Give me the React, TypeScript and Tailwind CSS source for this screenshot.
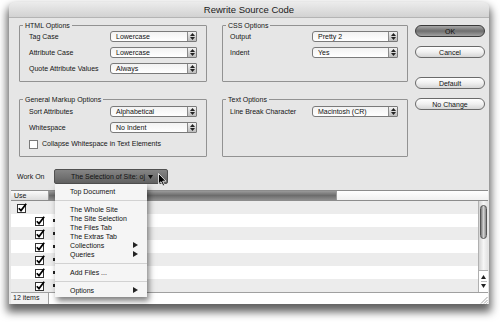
import React from "react";

const FONT = { fontFamily: '"Liberation Sans", Arial, Helvetica, sans-serif' };

function Stepper() {
  return (
    <div className="flex w-[9px] flex-col items-center justify-center gap-[1px] border-l border-[#8a8a8a] bg-gradient-to-b from-[#f4f4f4] via-[#d6d6d6] to-[#bdbdbd]">
      <svg width="5" height="3" viewBox="0 0 5 3">
        <path d="M0 3 L2.5 0 L5 3 Z" fill="#222" />
      </svg>
      <svg width="5" height="3" viewBox="0 0 5 3">
        <path d="M0 0 L5 0 L2.5 3 Z" fill="#222" />
      </svg>
    </div>
  );
}

function Popup({ value, w }: { value: string; w: string }) {
  return (
    <div
      className={`flex h-[11px] ${w} overflow-hidden rounded-l-[3px] rounded-r-[1px] border border-[#7a7a7a] bg-gradient-to-b from-[#f2f2f2] to-white`}
    >
      <div className="flex-1 pl-[5px] text-[7px] leading-[9px] text-[#111]">{value}</div>
      <Stepper />
    </div>
  );
}

function Row({ label, value, lw, pw }: { label: string; value: string; lw: string; pw: string }) {
  return (
    <div className="flex h-[11px] items-center">
      <div className={`${lw} text-[7px] leading-[9px] text-[#151515]`}>{label}</div>
      <Popup value={value} w={pw} />
    </div>
  );
}

function Button({ label, primary }: { label: string; primary?: boolean }) {
  return primary ? (
    <div className="flex h-[12px] w-[70px] items-center justify-center rounded-full border border-[#3a3a3a] bg-gradient-to-b from-[#a8a8a8] via-[#6e6e6e] to-[#a2a2a2] text-[7px] leading-[9px] text-[#111]">
      {label}
    </div>
  ) : (
    <div className="flex h-[12px] w-[70px] items-center justify-center rounded-full border border-[#6a6a6a] bg-gradient-to-b from-white via-[#f0f0f0] to-[#d6d6d6] text-[7px] leading-[9px] text-[#111]">
      {label}
    </div>
  );
}

function CheckBox({ checked }: { checked?: boolean }) {
  return (
    <svg width="10" height="10" viewBox="0 0 10 10">
      <rect x="0.5" y="1.5" width="8" height="8" fill="white" stroke={checked ? "#333" : "#7a7a7a"} />
      {checked && <path d="M1.8 5.2 L4 7.6 L9.2 0.8" fill="none" stroke="#000" strokeWidth="1.7" />}
    </svg>
  );
}

function Tri() {
  return (
    <svg width="5" height="6" viewBox="0 0 5 6">
      <path d="M0 0 L5 3 L0 6 Z" fill="#222" />
    </svg>
  );
}

function MenuItem({ label, sub }: { label: string; sub?: boolean }) {
  return (
    <div className="flex h-[9px] items-center justify-between pl-[15px] pr-[9px] text-[7px] leading-[9px] text-[#111]">
      <span>{label}</span>
      {sub && <Tri />}
    </div>
  );
}

function Sep() {
  return (
    <div className="flex h-[9px] items-center">
      <div className="h-px w-full bg-[#d2d2d2]" />
    </div>
  );
}

export default function App() {
  const rows = [0, 1, 2, 3, 4, 5, 6];
  return (
    <div className="h-[322px] w-[500px] overflow-hidden bg-white pl-[9px] pt-[2px]" style={FONT}>
      <div className="relative flex h-[302px] w-[480px] flex-col rounded-t-[6px] bg-[#e6e6e6] shadow-[0_6px_8px_2px_rgba(0,0,0,0.62)]">
        {/* Title bar */}
        <div className="flex h-[16px] items-center justify-center rounded-t-[6px] border-b border-[#b4b4b4] bg-gradient-to-b from-[#ececec] to-[#d2d2d2] text-[9.5px] leading-[12px] text-[#1a1a1a]">
          Rewrite Source Code
        </div>

        {/* Top area */}
        <div className="flex pl-[10px] pt-[3px]">
          <div className="flex w-[389px] flex-col">
            <div className="flex gap-[15px]">
              <fieldset className="h-[61px] w-[188px] rounded-[1px] border border-[#929292]">
                <legend className="ml-[3px] px-[2px] text-[7px] leading-[9px] text-[#151515]">HTML Options</legend>
                <div className="mt-[1px] flex flex-col gap-[5px] pl-[9px]">
                  <Row label="Tag Case" value="Lowercase" lw="w-[81px]" pw="w-[87px]" />
                  <Row label="Attribute Case" value="Lowercase" lw="w-[81px]" pw="w-[87px]" />
                  <Row label="Quote Attribute Values" value="Always" lw="w-[81px]" pw="w-[87px]" />
                </div>
              </fieldset>
              <fieldset className="h-[61px] w-[186px] rounded-[1px] border border-[#929292]">
                <legend className="ml-[3px] px-[2px] text-[7px] leading-[9px] text-[#151515]">CSS Options</legend>
                <div className="mt-[1px] flex flex-col gap-[5px] pl-[7px]">
                  <Row label="Output" value="Pretty 2" lw="w-[82px]" pw="w-[86px]" />
                  <Row label="Indent" value="Yes" lw="w-[82px]" pw="w-[86px]" />
                </div>
              </fieldset>
            </div>
            <div className="mt-[13px] flex gap-[15px]">
              <fieldset className="h-[62px] w-[188px] rounded-[1px] border border-[#929292]">
                <legend className="ml-[3px] px-[2px] text-[7px] leading-[9px] text-[#151515]">General Markup Options</legend>
                <div className="mt-[2px] flex flex-col gap-[5px] pl-[9px]">
                  <Row label="Sort Attributes" value="Alphabetical" lw="w-[81px]" pw="w-[87px]" />
                  <Row label="Whitespace" value="No Indent" lw="w-[81px]" pw="w-[87px]" />
                  <div className="flex h-[11px] items-center gap-[3px]">
                    <CheckBox />
                    <span className="text-[7px] leading-[9px] text-[#151515]">Collapse Whitespace in Text Elements</span>
                  </div>
                </div>
              </fieldset>
              <fieldset className="h-[62px] w-[186px] rounded-[1px] border border-[#929292]">
                <legend className="ml-[3px] px-[2px] text-[7px] leading-[9px] text-[#151515]">Text Options</legend>
                <div className="mt-[2px] flex flex-col gap-[5px] pl-[7px]">
                  <Row label="Line Break Character" value="Macintosh (CR)" lw="w-[82px]" pw="w-[86px]" />
                </div>
              </fieldset>
            </div>
          </div>
          <div className="ml-[7px] flex flex-col pt-[4px]">
            <Button label="OK" primary />
            <div className="mt-[9px]">
              <Button label="Cancel" />
            </div>
            <div className="mt-[19px]">
              <Button label="Default" />
            </div>
            <div className="mt-[9px]">
              <Button label="No Change" />
            </div>
          </div>
        </div>

        {/* Work On */}
        <div className="mt-[12px] flex h-[15px] items-center pl-[8px]">
          <div className="w-[37px] text-[7px] leading-[9px] text-[#151515]">Work On</div>
          <div className="flex h-[15px] w-[114px] items-center rounded-[2px] border border-[#505050] bg-gradient-to-b from-[#858585] to-[#626262] pl-[16px] text-[7px] leading-[9px] text-[#111]">
            <span>The Selection of Site: oj</span>
            <svg className="ml-[3px]" width="5" height="4" viewBox="0 0 5 4">
              <path d="M0 0 L5 0 L2.5 4 Z" fill="#111" />
            </svg>
          </div>
        </div>

        {/* Table */}
        <div className="mt-[6px] ml-[2px] mr-[1px] flex flex-1 flex-col bg-white">
          <div className="flex h-[11px] border-y border-[#8c8c8c]">
            <div className="w-[38px] border-r border-[#9a9a9a] bg-gradient-to-b from-[#fbfbfb] to-[#dcdcdc] pl-[3px] text-[7px] leading-[9px] text-[#151515]">
              Use
            </div>
            <div className="w-[287px] bg-gradient-to-b from-[#9a9a9a] via-[#6c6c6c] to-[#8e8e8e]" />
            <div className="flex-1 border-l border-[#9a9a9a] bg-gradient-to-b from-white to-[#f0f0f0]" />
          </div>
          <div className="flex h-[91px]">
            <div className="flex flex-1 flex-col">
              {rows.map((i) => (
                <div key={i} className={`flex h-[13px] items-center ${i % 2 === 0 ? "bg-[#ececec]" : "bg-white"}`}>
                  {i === 0 ? (
                    <div className="pl-[6px]">
                      <CheckBox checked />
                    </div>
                  ) : (
                    <div className="flex items-center pl-[24px]">
                      <CheckBox checked />
                      <div className="ml-[8px] h-[3px] w-[2px] bg-[#222]" />
                    </div>
                  )}
                </div>
              ))}
            </div>
            <div className="flex w-[10px] flex-col border-l border-[#b0b0b0] bg-gradient-to-r from-[#d4d4d4] via-[#f6f6f6] to-[#e2e2e2]">
              <div className="mx-[1px] mt-[4px] h-[34px] rounded-full border border-[#555] bg-gradient-to-r from-[#7a7a7a] via-[#d2d2d2] to-[#8a8a8a]" />
              <div className="flex-1" />
              <div className="flex h-[22px] flex-col items-center justify-center gap-[2px] border-t border-[#b0b0b0] bg-white">
                <svg width="5" height="4" viewBox="0 0 5 4">
                  <path d="M0 4 L2.5 0 L5 4 Z" fill="#222" />
                </svg>
                <div className="h-px w-[6px] bg-[#c0c0c0]" />
                <svg width="5" height="4" viewBox="0 0 5 4">
                  <path d="M0 0 L5 0 L2.5 4 Z" fill="#222" />
                </svg>
              </div>
            </div>
          </div>
          <div className="flex h-[12px] border-t border-[#a0a0a0] bg-white">
            <div className="w-[38px] border-r border-[#a0a0a0] bg-[#f2f2f2] pl-[2px] text-[7px] leading-[10px] text-[#151515]">
              12 items
            </div>
            <div className="flex-1" />
            <div className="flex w-[10px] items-end justify-end">
              <svg width="8" height="8" viewBox="0 0 8 8">
                <path d="M7.5 1 L1 7.5 M7.5 4 L4 7.5 M7.5 6.5 L6.5 7.5" stroke="#888" strokeWidth="0.8" />
              </svg>
            </div>
          </div>
        </div>

        {/* Dropdown menu */}
        <div className="absolute left-[46px] top-[182px] w-[92px] bg-[#f5f5f5] py-[2.5px] shadow-[2px_4px_6px_rgba(0,0,0,0.5)]">
          <MenuItem label="Top Document" />
          <Sep />
          <MenuItem label="The Whole Site" />
          <MenuItem label="The Site Selection" />
          <MenuItem label="The Files Tab" />
          <MenuItem label="The Extras Tab" />
          <MenuItem label="Collections" sub />
          <MenuItem label="Queries" sub />
          <Sep />
          <MenuItem label="Add Files ..." />
          <Sep />
          <MenuItem label="Options" sub />
        </div>

        {/* Mouse cursor */}
        <svg className="absolute left-[149px] top-[171px]" width="9" height="14" viewBox="0 0 9 14">
          <path d="M0.5 0.5 L0.5 11 L3 8.7 L5 13 L6.6 12.3 L4.7 8.2 L8 8.2 Z" fill="#000" stroke="#fff" strokeWidth="0.8" />
        </svg>
      </div>
    </div>
  );
}
